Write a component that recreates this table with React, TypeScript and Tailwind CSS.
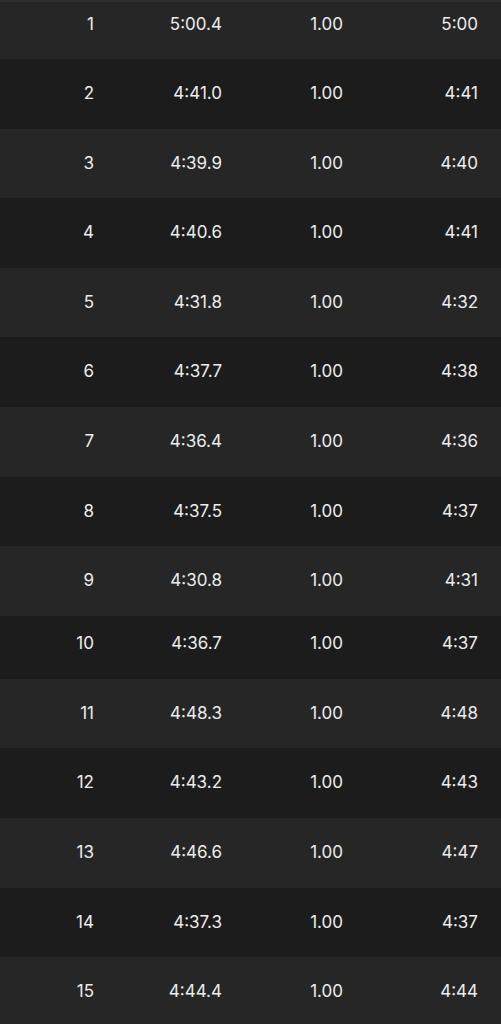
const splits = [
  { lap: 1, time: "5:00.4", dist: "1.00", pace: "5:00" },
  { lap: 2, time: "4:41.0", dist: "1.00", pace: "4:41" },
  { lap: 3, time: "4:39.9", dist: "1.00", pace: "4:40" },
  { lap: 4, time: "4:40.6", dist: "1.00", pace: "4:41" },
  { lap: 5, time: "4:31.8", dist: "1.00", pace: "4:32" },
  { lap: 6, time: "4:37.7", dist: "1.00", pace: "4:38" },
  { lap: 7, time: "4:36.4", dist: "1.00", pace: "4:36" },
  { lap: 8, time: "4:37.5", dist: "1.00", pace: "4:37" },
  { lap: 9, time: "4:30.8", dist: "1.00", pace: "4:31" },
  { lap: 10, time: "4:36.7", dist: "1.00", pace: "4:37" },
  { lap: 11, time: "4:48.3", dist: "1.00", pace: "4:48" },
  { lap: 12, time: "4:43.2", dist: "1.00", pace: "4:43" },
  { lap: 13, time: "4:46.6", dist: "1.00", pace: "4:47" },
  { lap: 14, time: "4:37.3", dist: "1.00", pace: "4:37" },
  { lap: 15, time: "4:44.4", dist: "1.00", pace: "4:44" },
];

const App = () => {
  return (
    <div
      className="w-[501px] h-[1024px] overflow-hidden bg-[#1c1c1c] border-t-2 border-[#303030] text-[17px] text-[#ededed]"
      style={{ fontFamily: "Inter, 'Noto Sans', sans-serif" }}
    >
      {splits.map((s, i) => (
        <div
          key={s.lap}
          className={`flex items-center ${
            i % 2 === 0 ? "bg-[#262626]" : "bg-[#1c1c1c]"
          } ${
            i === 0
              ? "h-[57px] pb-[11px]"
              : i === 9
                ? "h-[63px] pb-[7px]"
                : "h-[69.6px]"
          }`}
        >
          <div className="w-[94px] text-right">{s.lap}</div>
          <div className="w-[128px] text-right">{s.time}</div>
          <div className="w-[121px] text-right">{s.dist}</div>
          <div className="w-[135px] text-right">{s.pace}</div>
        </div>
      ))}
    </div>
  );
};

export default App;
